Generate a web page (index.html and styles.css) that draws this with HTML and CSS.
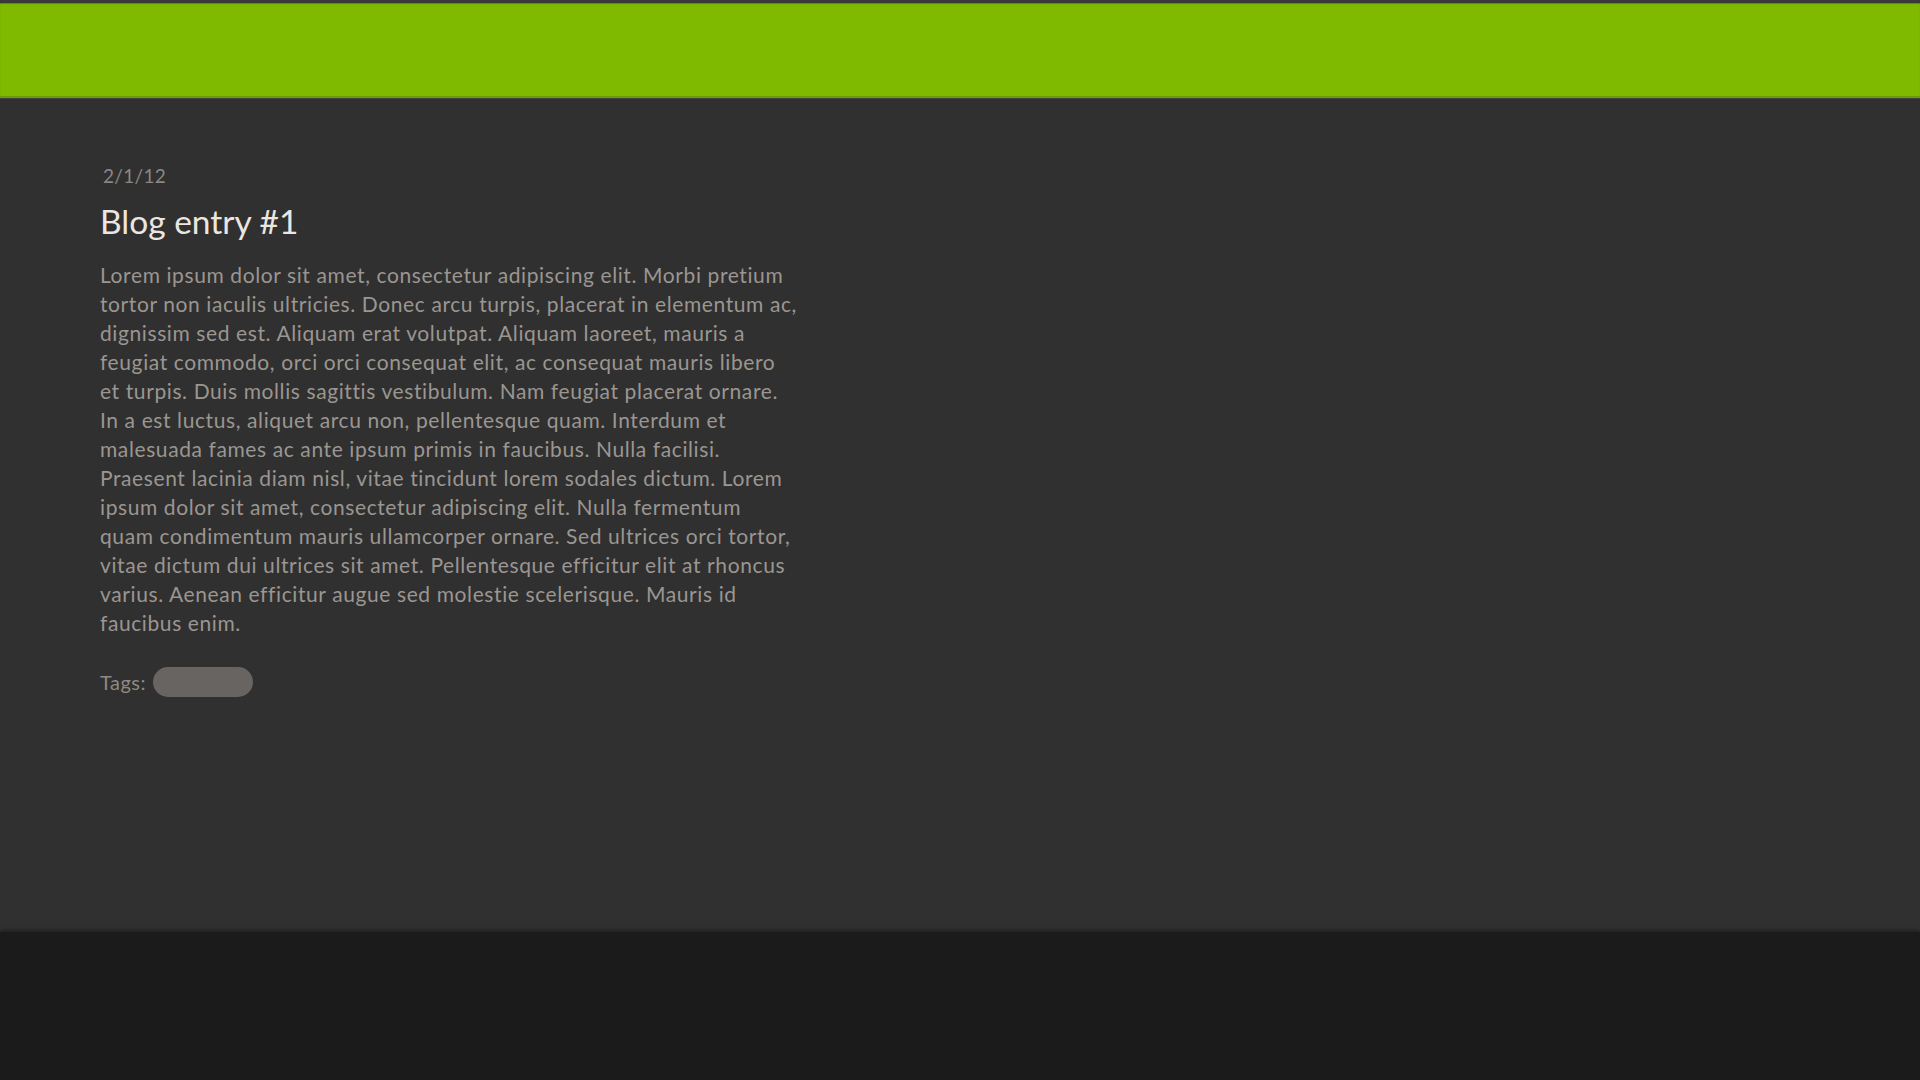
FILE: index.html
```html
<!DOCTYPE html>
<html lang="en">
<head>
<meta charset="utf-8">
<title>Blog</title>
<link rel="stylesheet" href="styles.css">
</head>
<body>
<header class="topbar"></header>
<main class="main">
  <article class="entry">
    <div class="entry-date">2/1/12</div>
    <h1 class="entry-title">Blog entry #1</h1>
    <p class="entry-body">Lorem ipsum dolor sit amet, consectetur adipiscing elit. Morbi pretium tortor non iaculis ultricies. Donec arcu turpis, placerat in elementum ac, dignissim sed est. Aliquam erat volutpat. Aliquam laoreet, mauris a feugiat commodo, orci orci consequat elit, ac consequat mauris libero et turpis. Duis mollis sagittis vestibulum. Nam feugiat placerat ornare. In a est luctus, aliquet arcu non, pellentesque quam. Interdum et malesuada fames ac ante ipsum primis in faucibus. Nulla facilisi. Praesent lacinia diam nisl, vitae tincidunt lorem sodales dictum. Lorem ipsum dolor sit amet, consectetur adipiscing elit. Nulla fermentum quam condimentum mauris ullamcorper ornare. Sed ultrices orci tortor, vitae dictum dui ultrices sit amet. Pellentesque efficitur elit at rhoncus varius. Aenean efficitur augue sed molestie scelerisque. Mauris id faucibus enim.</p>
    <div class="entry-tags">
      <span class="tags-label">Tags:</span>
      <span class="tag-pill"></span>
    </div>
  </article>
</main>
<footer class="footer"></footer>
</body>
</html>
```

FILE: styles.css
```css
html, body {
  margin: 0;
  padding: 0;
}

body {
  min-height: 100vh;
  display: flex;
  flex-direction: column;
  background: #303030;
  font-family: Lato, "Open Sans", sans-serif;
}

.topbar {
  height: 93px;
  background: #7fba00;
  border-top: 3px solid #3a3a3a;
  border-bottom: 2px solid #6b9c00;
  box-shadow: inset 0 1px 1px rgba(0, 0, 0, 0.25), 0 1px 0 #444;
}

.main {
  flex: 1;
  padding: 66px 0 0 100px;
}

.entry {
  width: 698px;
}

.entry-date {
  font-size: 19px;
  line-height: 24px;
  color: #8c8782;
  padding-left: 3px;
  letter-spacing: 0.3px;
}

.entry-title {
  margin: 13px 0 0;
  font-size: 33.5px;
  line-height: 40px;
  font-weight: 400;
  color: #ece6e0;
}

.entry-body {
  margin: 19px 0 0;
  font-size: 21px;
  line-height: 29px;
  color: #9b9691;
  letter-spacing: 0.6px;
}

.entry-tags {
  margin-top: 30px;
  display: flex;
  align-items: center;
  gap: 7px;
  font-size: 20px;
  line-height: 29px;
  color: #8e8984;
  letter-spacing: 0.5px;
}

.tag-pill {
  display: inline-block;
  width: 100px;
  height: 30px;
  border-radius: 15px;
  background: #686462;
}

.footer {
  height: 148px;
  background: #1b1b1b;
  box-shadow: 0 -2px 4px rgba(0, 0, 0, 0.35);
}
```
